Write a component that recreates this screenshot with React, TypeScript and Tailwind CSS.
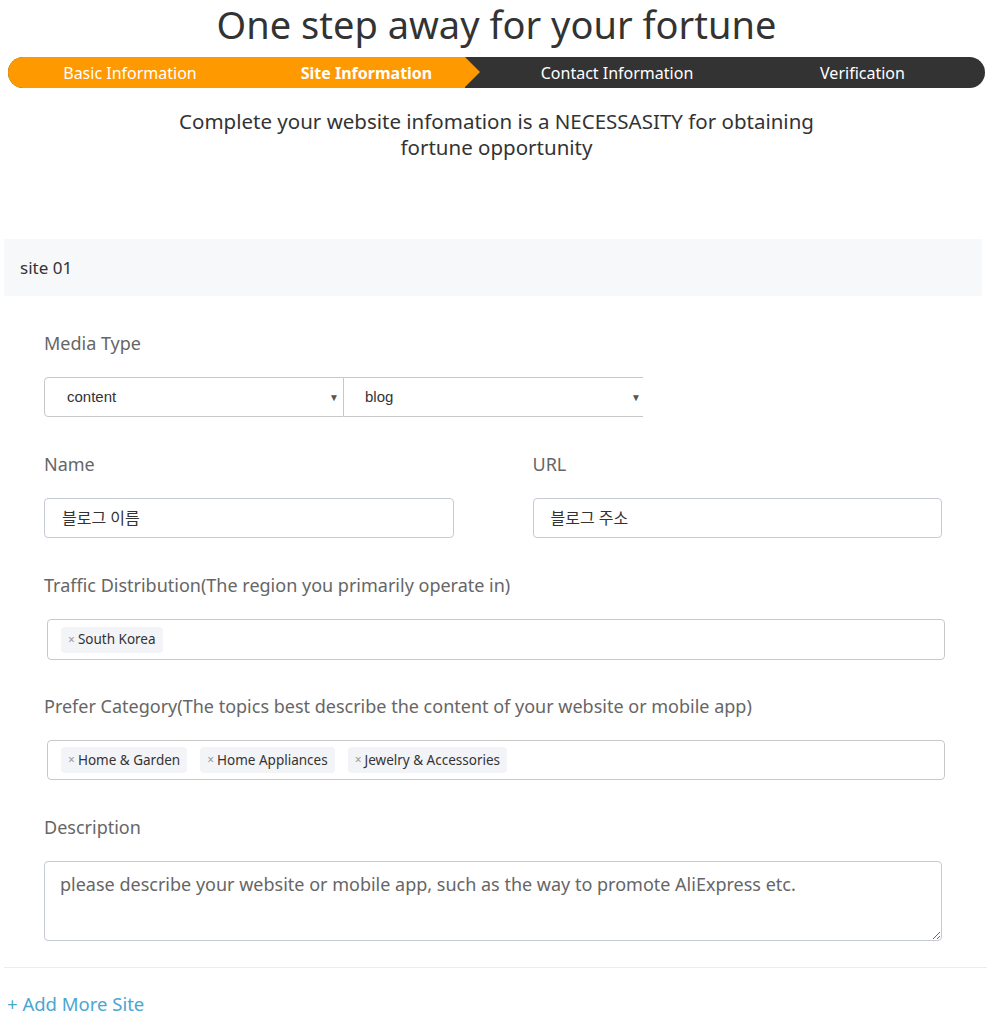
import React from "react";

const font = { fontFamily: '"Noto Sans", "Noto Sans CJK KR", sans-serif' };

function Tag({ label }: { label: string }) {
  return (
    <span className="inline-flex h-[26px] items-center rounded-[4px] bg-[#f3f4f8] px-[7px] text-[13.5px] text-[#333]">
      <span className="mr-[3px] text-[12px] text-[#999]">×</span>
      {label}
    </span>
  );
}

function Label({ children }: { children: React.ReactNode }) {
  return <div className="h-[24px] text-[18px] leading-[24px] text-[#666]">{children}</div>;
}

export default function App() {
  return (
    <div className="min-h-[1027px] w-full bg-white" style={font}>
      <h1 className="pt-[2px] text-center text-[38px] leading-[44px] text-[#333]">One step away for your fortune</h1>

      <div className="mx-[8px] mt-[11px] flex h-[31px] overflow-hidden rounded-full bg-[#333] text-[16px] text-white">
        <div className="flex w-[244px] items-center justify-center bg-[#ff9900]">Basic Information</div>
        <div className="flex w-[213px] items-center justify-center bg-[#ff9900] pl-[16px] font-bold">Site Information</div>
        <div className="h-0 w-0 border-y-[15.5px] border-l-[15px] border-y-transparent border-l-[#ff9900]" />
        <div className="flex w-[274px] items-center justify-center">Contact Information</div>
        <div className="flex flex-1 items-center justify-center pr-[14px]">Verification</div>
      </div>

      <p className="mx-auto mt-[20px] max-w-[680px] text-center text-[20.5px] leading-[26px] text-[#333]">
        Complete your website infomation is a NECESSASITY for obtaining
        <br />
        fortune opportunity
      </p>

      <div className="mx-[4px] mt-[79px] w-[978px]">
        <div className="flex h-[57px] items-center bg-[#f7f8fa] pl-[16px] text-[17px] text-[#333]">site 01</div>

        <div className="pl-[40px] pt-[35px]">
          <Label>Media Type</Label>
          <div className="mt-[22px] flex h-[40px] text-[15px] text-[#333]" style={{ fontFamily: '"Liberation Sans", Arial, sans-serif' }}>
            <div className="flex w-[300px] items-center justify-between rounded-l-[4px] border border-[#c8c8c8] pl-[22px] pr-[4px]">
              <span>content</span>
              <span className="text-[10px] text-[#555]">▼</span>
            </div>
            <div className="flex w-[299px] items-center justify-between border-y border-[#c8c8c8] pl-[21px] pr-[2px]">
              <span>blog</span>
              <span className="text-[10px] text-[#555]">▼</span>
            </div>
          </div>

          <div className="mt-[35px] grid w-[898px] grid-cols-2 gap-x-[79px]">
            <div>
              <Label>Name</Label>
              <div className="mt-[22px] flex h-[40px] items-center rounded-[4px] border border-[#c5cad5] pl-[17px] text-[16px] text-[#333]">블로그 이름</div>
            </div>
            <div>
              <Label>URL</Label>
              <div className="mt-[22px] flex h-[40px] items-center rounded-[4px] border border-[#c5cad5] pl-[17px] text-[16px] text-[#333]">블로그 주소</div>
            </div>
          </div>

          <div className="mt-[35px]">
            <Label>Traffic Distribution(The region you primarily operate in)</Label>
            <div className="ml-[3px] mt-[22px] flex h-[41px] w-[898px] items-center gap-[13px] rounded-[4px] border border-[#c8c8c8] pl-[13px]">
              <Tag label="South Korea" />
            </div>
          </div>

          <div className="mt-[34px]">
            <Label>Prefer Category(The topics best describe the content of your website or mobile app)</Label>
            <div className="ml-[3px] mt-[22px] flex h-[40px] w-[898px] items-center gap-[13px] rounded-[4px] border border-[#c8c8c8] pl-[13px]">
              <Tag label="Home & Garden" />
              <Tag label="Home Appliances" />
              <Tag label="Jewelry & Accessories" />
            </div>
          </div>

          <div className="mt-[35px]">
            <Label>Description</Label>
            <textarea
              readOnly
              className="mt-[22px] block h-[80px] w-[898px] rounded-[4px] border border-[#c5cad5] px-[15px] pt-[10px] text-[18px] leading-[24px] text-[#333] placeholder:text-[#666] outline-none"
              placeholder="please describe your website or mobile app, such as the way to promote AliExpress etc."
              style={font}
            />
          </div>
        </div>
      </div>

      <div className="mx-[4px] mt-[26px] h-px w-[983px] bg-[#ececec]" />
      <div className="mt-[24px] pl-[7px] text-[18.5px] leading-[24px] text-[#4ba6cf]">+ Add More Site</div>
    </div>
  );
}
